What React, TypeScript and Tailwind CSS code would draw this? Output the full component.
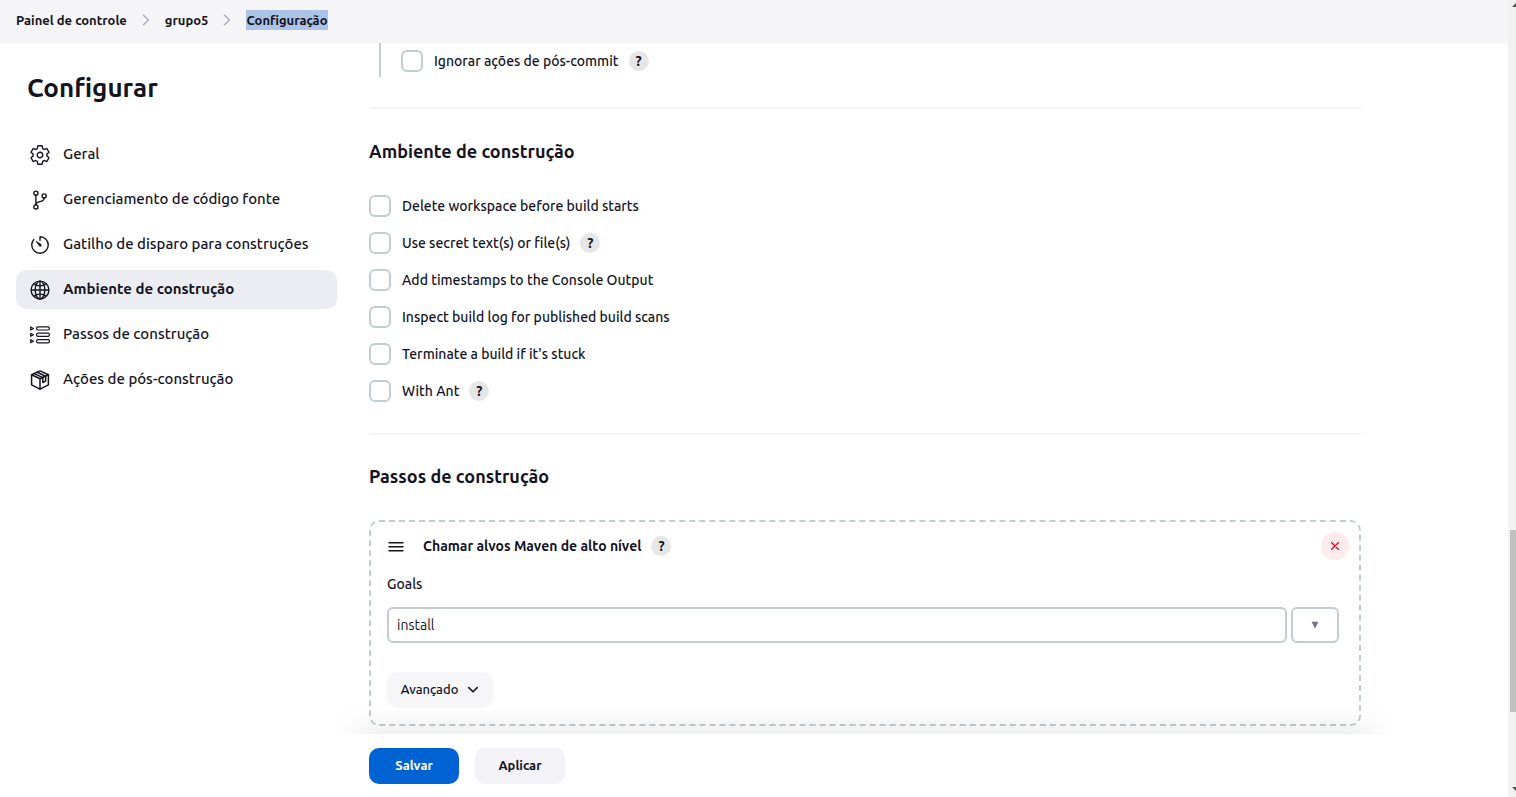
import type { ReactNode } from "react";
import {
  IoGitBranchOutline,
  IoGlobeOutline,
  IoSettingsOutline,
  IoTimerOutline,
} from "react-icons/io5";

function StepsIcon() {
  return (
    <svg width="20" height="18" viewBox="0 0 20 18" fill="none" stroke="currentColor" strokeWidth="1.2" strokeLinejoin="round" aria-hidden="true">
      {[0, 6.4, 12.8].map((y) => (
        <g key={y}>
          <path d={`M0.7 ${y + 0.9}L3.4 ${y + 2.4}L0.7 ${y + 3.9}Z`} />
          <rect x="6.6" y={y + 0.8} width="12.8" height="3.2" rx="1.4" />
        </g>
      ))}
    </svg>
  );
}

function PackageIcon() {
  return (
    <svg width="20" height="20" viewBox="0 0 20 20" fill="none" stroke="currentColor" strokeWidth="1.5" strokeLinejoin="round" strokeLinecap="round" aria-hidden="true">
      <path d="M10 0.9L18.4 4.8V14.8L10 19.2L1.6 14.8V4.8Z" />
      <path d="M1.6 4.8L10 8.8L18.4 4.8M10 8.8V19.2" />
      <path d="M4.4 3.6L12.8 7.6V12.6L15.6 11.2V6.2L7.2 2.2" />
    </svg>
  );
}

function ChevronRight() {
  return (
    <svg width="8" height="12" viewBox="0 0 8 12" fill="none" stroke="#a9a9bd" strokeWidth="1.4" strokeLinecap="round" strokeLinejoin="round" aria-hidden="true">
      <path d="M1.5 1.2L6.5 6L1.5 10.8" />
    </svg>
  );
}

function Help({ topic }: { topic: string }) {
  return (
    <button
      type="button"
      aria-label={`Ajuda: ${topic}`}
      className="flex size-5 shrink-0 items-center justify-center rounded-full bg-[#e6e6e6] text-sm leading-5 font-semibold"
    >
      ?
    </button>
  );
}

function CheckRow({ id, label, help }: { id: string; label: string; help?: boolean }) {
  return (
    <div className="flex h-[22px] items-center">
      <input
        id={id}
        type="checkbox"
        className="size-[22px] shrink-0 appearance-none rounded-md border-2 border-[#c3cdd1] bg-white checked:border-[#0062d3] checked:bg-[#0062d3]"
      />
      <label htmlFor={id} className="mr-[10px] pl-[11px] text-sm leading-[22px] font-medium">
        {label}
      </label>
      {help && <Help topic={label} />}
    </div>
  );
}

const navItems: { label: string; icon: ReactNode; active?: boolean }[] = [
  { label: "Geral", icon: <IoSettingsOutline size={22} /> },
  { label: "Gerenciamento de código fonte", icon: <IoGitBranchOutline size={22} /> },
  { label: "Gatilho de disparo para construções", icon: <IoTimerOutline size={22} /> },
  { label: "Ambiente de construção", icon: <IoGlobeOutline size={22} />, active: true },
  { label: "Passos de construção", icon: <StepsIcon /> },
  { label: "Ações de pós-construção", icon: <PackageIcon /> },
];

const environmentOptions = [
  { id: "delete-workspace", label: "Delete workspace before build starts" },
  { id: "secret-text", label: "Use secret text(s) or file(s)", help: true },
  { id: "timestamps", label: "Add timestamps to the Console Output" },
  { id: "inspect-log", label: "Inspect build log for published build scans" },
  { id: "terminate", label: "Terminate a build if it's stuck" },
  { id: "with-ant", label: "With Ant", help: true },
];

export default function App() {
  return (
    <div className="flex min-h-screen bg-white font-['Ubuntu','Noto_Sans',sans-serif] text-[#14141f]">
      <div className="flex min-w-0 flex-1 flex-col">
        <header className="h-[43px] shrink-0 bg-[#f5f5f8] pl-4">
          <nav aria-label="Trilha" className="flex h-10 items-center gap-[15px] text-[13px] leading-5 font-semibold">
            <a href="#painel">Painel de controle</a>
            <ChevronRight />
            <a href="#grupo5">grupo5</a>
            <ChevronRight />
            <a href="#configuracao" className="bg-[#acc2e6]">Configuração</a>
          </nav>
        </header>

        <div className="flex flex-1">
          <aside className="w-[353px] shrink-0 px-4 pt-[27px]">
            <h1 className="pl-[11px] text-[26px] leading-9 font-bold">Configurar</h1>
            <nav aria-label="Seções" className="mt-[29px] flex flex-col gap-[6px]">
              {navItems.map((item) => (
                <a
                  key={item.label}
                  href="#secao"
                  aria-current={item.active ? "true" : undefined}
                  className={
                    item.active
                      ? "flex h-[39px] items-center gap-[11px] rounded-[10px] bg-[#ecedf3] px-3 text-[15px] font-bold"
                      : "flex h-[39px] items-center gap-[11px] rounded-[10px] px-3 text-[15px] font-medium"
                  }
                >
                  <span className="flex w-6 shrink-0 justify-center">{item.icon}</span>
                  {item.label}
                </a>
              ))}
            </nav>
          </aside>

          <main className="mr-[147px] ml-4 flex min-w-0 flex-1 flex-col">
            <div className="ml-[10px] h-[34px] border-l-2 border-[#c3cdd1] pt-[7px] pl-5">
              <CheckRow id="skip-post-commit" label="Ignorar ações de pós-commit" help />
            </div>

            <section className="mt-[30px] border-t-2 border-[#f2f2f7] pt-[30px]">
              <h2 className="text-lg leading-6 font-bold">Ambiente de construção</h2>
              <div className="mt-8 flex flex-col gap-[15px]">
                {environmentOptions.map((option) => (
                  <CheckRow key={option.id} {...option} />
                ))}
              </div>
            </section>

            <section className="mt-[31px] border-t-2 border-[#f2f2f7] pt-[29px]">
              <h2 className="text-lg leading-6 font-bold">Passos de construção</h2>
              <div className="mt-8 rounded-[10px] border-2 border-dashed border-[#c3cdd1] px-4 pt-[10px] pb-4">
                <div className="flex h-7 items-center">
                  <svg width="18" height="12" viewBox="0 0 18 12" fill="none" stroke="currentColor" strokeWidth="1.4" strokeLinecap="round" aria-hidden="true">
                    <path d="M2 2.8H16M2 6.8H16M2 10.8H16" />
                  </svg>
                  <h3 className="mr-[10px] ml-[18px] text-sm leading-5 font-bold">Chamar alvos Maven de alto nível</h3>
                  <Help topic="Chamar alvos Maven de alto nível" />
                  <button
                    type="button"
                    aria-label="Remover"
                    className="-mr-[6px] ml-auto flex size-7 items-center justify-center rounded-full bg-[#fdebed] text-[#e6001f]"
                  >
                    <svg width="8" height="8" viewBox="0 0 8 8" fill="none" stroke="currentColor" strokeWidth="1.3" strokeLinecap="round" aria-hidden="true">
                      <path d="M0.7 0.7L7.3 7.3M7.3 0.7L0.7 7.3" />
                    </svg>
                  </button>
                </div>
                <label htmlFor="goals" className="mt-[14px] block text-sm leading-5 font-medium">Goals</label>
                <div className="mt-[13px] mr-1 flex gap-1">
                  <input
                    id="goals"
                    type="text"
                    defaultValue="install"
                    className="h-9 min-w-0 flex-1 rounded-md border-2 border-[#c3cdd1] px-2 text-sm outline-none focus:border-[#0062d3]"
                  />
                  <button
                    type="button"
                    aria-label="Expandir campo Goals"
                    className="flex h-9 w-12 items-center justify-center rounded-md border-2 border-[#c3cdd1] text-[#73738c]"
                  >
                    <svg width="8" height="8" viewBox="0 0 8 8" fill="currentColor" aria-hidden="true">
                      <path d="M0.5 0.8H7.5L4 7.6Z" />
                    </svg>
                  </button>
                </div>
                <button
                  type="button"
                  className="mt-[29px] flex h-9 w-[106px] items-center justify-center gap-[9px] rounded-[10px] bg-[#f6f6f9] text-[13px] font-medium"
                >
                  Avançado
                  <svg width="12" height="8" viewBox="0 0 12 8" fill="none" stroke="currentColor" strokeWidth="1.6" strokeLinecap="round" strokeLinejoin="round" aria-hidden="true">
                    <path d="M1.8 1.6L6 5.8L10.2 1.6" />
                  </svg>
                </button>
              </div>
            </section>

            <div className="sticky bottom-0 mt-2 bg-white pt-[14px] pb-[13px]">
              <div
                aria-hidden="true"
                className="pointer-events-none absolute -inset-x-8 bottom-full h-7 bg-linear-to-b from-transparent to-black/6 mask-[linear-gradient(to_right,transparent,black_48px,black_calc(100%-48px),transparent)]"
              />
              <div className="flex gap-4 text-[13px] font-semibold">
                <button type="submit" className="h-9 w-[90px] rounded-[10px] bg-[#0062d3] text-white">Salvar</button>
                <button type="button" className="h-9 w-[90px] rounded-[10px] bg-[#f2f2f7]">Aplicar</button>
              </div>
            </div>
          </main>
        </div>
      </div>

      <div aria-hidden="true" className="flex w-2 shrink-0 flex-col overflow-hidden bg-[#f1f1f1]">
        <svg width="8" height="12" viewBox="0 0 8 12" fill="#505050">
          <path d="M4 7L8 3V7Z" />
        </svg>
        <div className="flex-[518]" />
        <div className="ml-0.5 flex-[182] bg-[#c1c1c1]" />
        <div className="flex-[73]" />
        <svg width="8" height="12" viewBox="0 0 8 12" fill="#505050">
          <path d="M4 2H8V6Z" />
        </svg>
      </div>
    </div>
  );
}
